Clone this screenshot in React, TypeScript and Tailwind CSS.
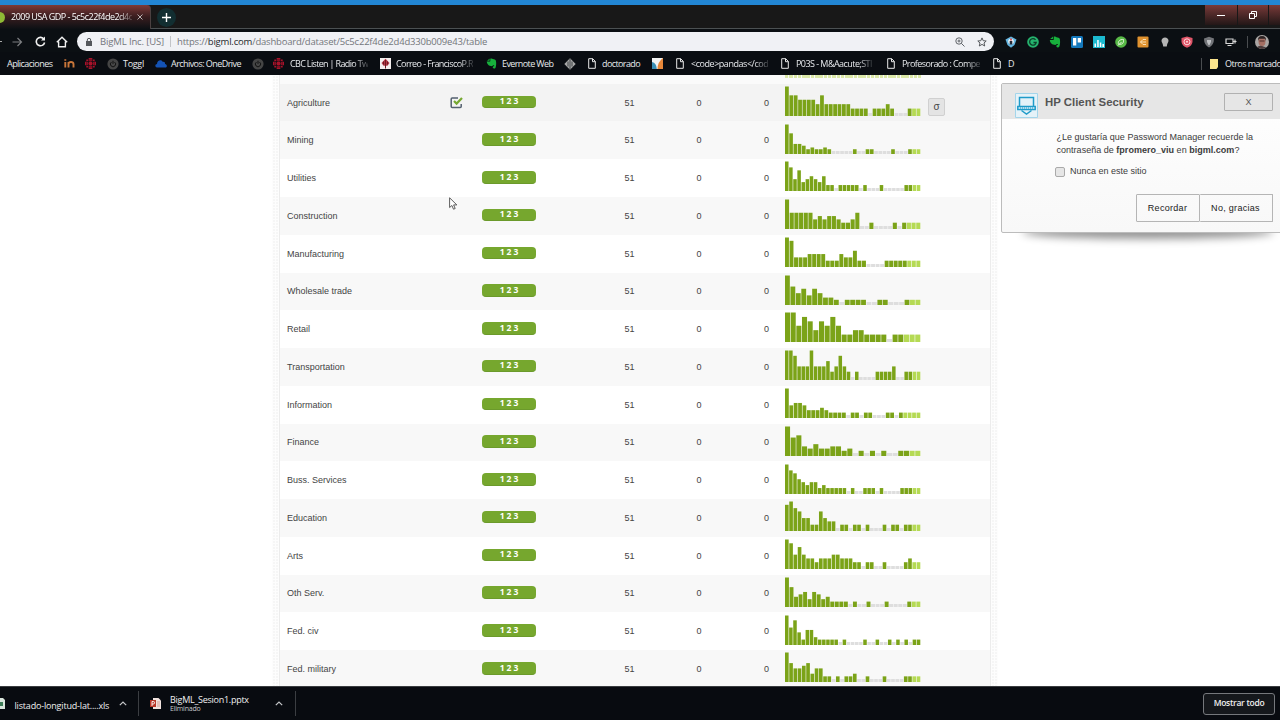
import type { ReactNode } from "react";

type Field = { name: string; bins: number[]; light: number };

// one entry per histogram bin, the last `light` bins are drawn in the pale green
const fields: Field[] = [
  { name: "Agriculture", light: 2, bins: [6, 4, 4, 3, 3, 3, 3, 2, 4, 2, 2, 2, 2, 2, 2, 1, 1, 1, 1, 0, 1, 1, 1, 2, 1, 0, 0, 0, 1, 1, 1] },
  { name: "Mining", light: 2, bins: [15, 10, 4, 4, 3, 1, 2, 1, 1, 2, 1, 0, 0, 0, 0, 0, 1, 0, 0, 1, 1, 0, 0, 0, 0, 1, 0, 0, 0, 1, 1, 1] },
  { name: "Utilities", light: 2, bins: [9, 7, 3, 6, 2, 3, 4, 3, 2, 4, 1, 1, 0, 1, 1, 1, 1, 1, 0, 1, 0, 0, 0, 1, 0, 0, 0, 0, 0, 1, 1, 1, 1] },
  { name: "Construction", light: 3, bins: [8, 4, 4, 4, 4, 4, 2, 3, 2, 3, 3, 2, 1, 1, 2, 4, 0, 0, 1, 0, 0, 0, 0, 1, 0, 1, 1, 1, 1] },
  { name: "Manufacturing", light: 3, bins: [8, 7, 2, 2, 2, 3, 3, 3, 3, 1, 1, 1, 3, 2, 2, 4, 1, 1, 0, 0, 0, 0, 1, 1, 1, 1, 1, 1, 1, 1] },
  { name: "Wholesale trade", light: 2, bins: [12, 7, 4, 6, 3, 6, 4, 2, 2, 1, 0, 1, 1, 1, 1, 0, 0, 1, 1, 0, 0, 0, 1, 1, 1] },
  { name: "Retail", light: 3, bins: [6, 6, 3, 5, 4, 2, 4, 3, 5, 3, 1, 1, 2, 2, 1, 1, 1, 1, 0, 1, 1, 1, 1, 1] },
  { name: "Transportation", light: 2, bins: [5, 5, 4, 2, 2, 2, 5, 2, 2, 2, 3, 1, 2, 4, 2, 1, 0, 1, 0, 0, 0, 0, 1, 1, 1, 1, 2, 0, 0, 1, 1, 1, 1] },
  { name: "Information", light: 4, bins: [11, 4, 5, 5, 4, 2, 2, 2, 3, 2, 1, 1, 1, 1, 0, 1, 1, 0, 1, 1, 0, 0, 0, 1, 1, 0, 1, 1, 1, 1, 1] },
  { name: "Finance", light: 2, bins: [12, 7, 8, 3, 2, 4, 2, 2, 3, 3, 1, 2, 0, 1, 0, 1, 0, 1, 0, 0, 1, 1, 1, 1] },
  { name: "Buss. Services", light: 2, bins: [9, 7, 6, 4, 3, 2, 3, 3, 1, 2, 1, 1, 1, 1, 1, 0, 1, 0, 0, 1, 1, 1, 0, 1, 0, 0, 0, 0, 1, 1, 1, 1, 1] },
  { name: "Education", light: 2, bins: [7, 8, 6, 5, 3, 3, 1, 1, 5, 3, 2, 2, 0, 1, 1, 0, 1, 1, 0, 1, 0, 0, 0, 1, 0, 1, 1, 0, 1, 1, 1, 1] },
  { name: "Arts", light: 2, bins: [7, 6, 3, 5, 3, 2, 2, 1, 2, 2, 2, 3, 3, 2, 2, 2, 1, 1, 0, 1, 1, 0, 0, 1, 0, 0, 0, 0, 1, 2, 1, 1] },
  { name: "Oth Serv.", light: 2, bins: [11, 7, 3, 4, 5, 2, 5, 4, 2, 3, 1, 1, 1, 1, 0, 1, 0, 0, 1, 0, 0, 0, 1, 0, 0, 0, 0, 1, 1, 1] },
  { name: "Fed. civ", light: 0, bins: [11, 6, 9, 4, 1, 5, 5, 2, 1, 1, 1, 1, 1, 0, 1, 0, 0, 0, 0, 1, 0, 0, 1, 0, 0, 1, 0, 1, 0, 1, 0, 1, 1] },
  { name: "Fed. military", light: 2, bins: [10, 6, 4, 4, 5, 6, 2, 4, 4, 1, 1, 0, 1, 0, 1, 1, 2, 0, 0, 1, 0, 0, 0, 1, 0, 0, 0, 0, 1, 1, 1, 1] },
];

function Histogram({ bins, light }: { bins: number[]; light: number }) {
  const max = Math.max(...bins);
  const pitch = 135.9 / bins.length;
  return (
    <svg width="136" height="30" viewBox="0 0 136 30" className="block shrink-0">
      {bins.map((n, i) => {
        const h = 3 + (n / max) * 26.5;
        const fill = n === 0 ? "#dedede" : i >= bins.length - light ? "#b5da54" : "#7ba318";
        return <rect key={i} x={i * pitch} y={30 - h} width={pitch - 0.6} height={h} fill={fill} />;
      })}
    </svg>
  );
}

function Row({ field, index }: { field: Field; index: number }) {
  const bg = index === 0 ? "bg-[#f3f3f3]" : index % 2 ? "bg-[#f8f8f8]" : "bg-white";
  return (
    <div className={`flex h-[37.77px] shrink-0 items-center pl-[7px] text-[9px] text-[#444] ${bg}`}>
      <span className="w-[163px] pt-[1.4px] whitespace-nowrap">{field.name}</span>
      <span className="w-8">
        {index === 0 && (
          <svg width="13" height="13" viewBox="0 0 13 13" fill="none">
            <path d="M8 2H2.2Q1.2 2 1.2 3v7.5q0 1 1 1h8q1 0 1-1V8" stroke="#53606f" strokeWidth="1.5" />
            <path d="M4 5l2.600 2.600 5.400-5.600" stroke="#76a832" strokeWidth="2.200" />
          </svg>
        )}
      </span>
      <span className="mb-[1.6px] flex h-[12.5px] w-[54px] items-center justify-center rounded-[4px] border-b border-[#6b9a2b] bg-[#76a72e] pl-[2px] font-['Open_Sans',sans-serif] text-[8.5px] leading-none font-bold tracking-[2px] text-white">
        123
      </span>
      <span className="w-[98.5px] pt-[1.4px] text-right">51</span>
      <span className="w-[67px] pt-[1.4px] text-right">0</span>
      <span className="mr-4 w-[67.5px] pt-[1.4px] text-right">0</span>
      <div className="mb-[3.4px]">
        <Histogram bins={field.bins} light={field.light} />
      </div>
      {index === 0 && (
        <span className="mt-[8px] ml-[7px] flex h-[18px] w-[17px] items-center justify-center rounded-[2px] border border-[#d0d0d0] bg-[#e4e4e4] text-[10px] leading-none">
          σ
        </span>
      )}
    </div>
  );
}

function Texture() {
  return (
    <div className="w-[7px] shrink-0 bg-[#f6f6f6] bg-[linear-gradient(#fdfdfd_1px,transparent_1px),linear-gradient(90deg,#fdfdfd_1px,transparent_1px)] bg-[size:3px_3px]" />
  );
}

function DatasetTable() {
  return (
    <div className="flex h-[611px] overflow-hidden pl-[272px]">
      <Texture />
      <div className="flex w-[712px] shrink-0 flex-col border-x border-[#ececec]">
        <div className="h-[8.7px] shrink-0 bg-[#fafafa] pl-[505px]">
          <div className="h-[3px] w-[136px] bg-[repeating-linear-gradient(90deg,#dbe8a8_0_3.4px,#fafafa_3.4px_4.3px)]" />
        </div>
        {fields.map((f, i) => (
          <Row key={f.name} field={f} index={i} />
        ))}
      </div>
      <Texture />
    </div>
  );
}

function Doc() {
  return (
    <svg className="shrink-0" width="8" height="11" viewBox="0 0 8 11" fill="none" stroke="#e8e8e8">
      <path d="M.7.7h4L7.3 3.4v6.9H.7z" />
      <path d="M4.5.7v3h2.8" />
    </svg>
  );
}

function Cbc() {
  return (
    <svg className="shrink-0" width="11" height="11" viewBox="0 0 12 12" fill="#a9122a">
      <circle cx="6" cy="6" r="2.2" />
      <path d="M4 0h4v1.8H4zM4 10.2h4V12H4zM0 4h1.8v4H0zM10.2 4H12v4h-1.8zM1.4 1.6h2v2h-2zM8.6 1.6h2v2h-2zM1.4 8.4h2v2h-2zM8.6 8.4h2v2h-2zM4 2.5h4v1H4zM4 8.5h4v1H4zM2.4 4.3h1v3.4h-1zM8.6 4.3h1v3.4h-1z" />
    </svg>
  );
}

function Power() {
  return (
    <svg className="shrink-0" width="12" height="12" viewBox="0 0 12 12" fill="none">
      <circle cx="6" cy="6" r="5.6" fill="#454545" />
      <path d="M6 2.8v3M4.4 4.1a2.6 2.6 0 1 0 3.2 0" stroke="#111" />
    </svg>
  );
}

function Elephant({ size = 12 }: { size?: number }) {
  return (
    <svg className="shrink-0" width={size} height={size} viewBox="0 0 12 12" fill="#17b03c">
      <path d="M4 .6 3.9 3H1.2zM4.7.8c1-.5 2.2-.3 2.8.4 1.500.1 3 .5 3.300 1.800.5 2.200.4 5.500-.4 7.500-.5 1.300-2.600 1.300-3 .1-.3-1 .4-1.700 1.400-1.600.5-.7-.2-1-1.100-1-.5.9-1.500 1.100-2.600.8C2.200 8.300 1 6.200.8 3.900h3.500q.4 0 .4-.5z" />
    </svg>
  );
}

// titles longer than their slot fade out at the right
const FADE = "[mask-image:linear-gradient(90deg,#000_82%,rgba(0,0,0,0.2))]";

function Mark({ slot, icon, text, textClass = "" }: { slot: string; icon?: ReactNode; text?: string; textClass?: string }) {
  return (
    <div className={`flex shrink-0 items-center ${slot}`}>
      {icon}
      {text && <span className={`whitespace-nowrap ${textClass}`}>{text}</span>}
    </div>
  );
}

function Bookmarks() {
  return (
    <div className="flex h-[23px] items-center bg-[#0a0d12] pl-[7px] text-[9px] text-[#e8eaed]">
      <Mark slot="w-[57px]" text="Aplicaciones" textClass="tracking-[-0.54px]" />
      <Mark
        slot="w-[21px]"
        icon={
          <svg width="11" height="9" viewBox="0 0 11 9" fill="none" stroke="#c9763a" strokeWidth="1.9">
            <path d="M1.300 3v5.500M1.300.2v1.500M4.500 8.500V3M4.500 5q.2-2 2.500-2t2.500 2v3.500" />
          </svg>
        }
      />
      <Mark slot="w-[22px]" icon={<Cbc />} />
      <Mark slot="w-12" icon={<Power />} text="Toggl" textClass="ml-[4px] tracking-[-0.3px]" />
      <Mark
        slot="w-[97px]"
        icon={
          <svg width="12" height="8" viewBox="0 0 12 8">
            <path d="M2 7.500C-.5 7.300 0 4 2 4c0-3.500 4-5 5.600-2.200C10 1.500 10.200 3 10 4c2.400.4 2.400 3.300.4 3.500z" fill="#1453b5" />
          </svg>
        }
        text="Archivos: OneDrive"
        textClass="ml-1 tracking-[-0.56px]"
      />
      <Mark slot="w-[21px]" icon={<Power />} />
      <Mark slot="w-[107px]" icon={<Cbc />} text="CBC Listen | Radio Tw" textClass={`ml-[6px] tracking-[-0.66px] ${FADE}`} />
      <Mark
        slot="w-[106px]"
        icon={
          <svg width="11" height="11" viewBox="0 0 11 11">
            <path d="M0 0h11v11H0z" fill="#f4eeee" />
            <path d="M5.500.8 9.500 5 7.500 7.800h-4L1.500 5z" fill="#b23443" />
            <path d="M5.500 2v8.500M3.500 3.500v3M7.500 3.500v3" stroke="#6e1720" />
          </svg>
        }
        text="Correo - FranciscoP.R"
        textClass={`ml-[5px] tracking-[-0.58px] ${FADE}`}
      />
      <Mark slot="w-[78px]" icon={<Elephant size={11} />} text="Evernote Web" textClass="ml-[5px] tracking-[-0.6px]" />
      <Mark
        slot="w-6"
        icon={
          <svg width="12" height="12" viewBox="0 0 12 12">
            <path d="M6 .3 11.700 6 6 11.700.3 6z" fill="#a9a9a9" />
            <path d="M6 1v10M4 3.500v5M8 3.500v5" stroke="#22262a" strokeWidth=".8" />
          </svg>
        }
      />
      <Mark slot="w-16" icon={<Doc />} text="doctorado" textClass="ml-[6px] tracking-[-0.6px]" />
      <Mark
        slot="w-6"
        icon={
          <svg width="11" height="11" viewBox="0 0 11 11">
            <path d="M0 0h11v11H0z" fill="#f3f3f3" />
            <path d="M11 0v11H5.500Q5.500 4 11 0z" fill="#e8883a" />
            <path d="M0 4q4.500 1 4.800 7H0z" fill="#3b8fb5" />
          </svg>
        }
      />
      <Mark slot="w-[105px]" icon={<Doc />} text="<code>pandas</cod" textClass={`ml-[7px] tracking-[-0.46px] ${FADE}`} />
      <Mark slot="w-[106px]" icon={<Doc />} text={"P03S - M&Aacute;STI"} textClass={`ml-[7px] tracking-[-0.55px] ${FADE}`} />
      <Mark slot="w-[106px]" icon={<Doc />} text="Profesorado : Compe" textClass={`ml-[7px] tracking-[-0.57px] ${FADE}`} />
      <Mark slot="w-[208px]" icon={<Doc />} text="D" textClass="ml-[7px]" />
      <span className="mr-2 h-3 w-px shrink-0 bg-[#4a4d50]" />
      <Mark
        slot="w-20"
        icon={
          <svg className="shrink-0" width="8" height="10" viewBox="0 0 8 10">
            <path d="M0 0h8v8L6.500 10H0z" fill="#fbe48d" />
          </svg>
        }
        text="Otros marcado"
        textClass="ml-[7px] tracking-[-0.52px]"
      />
    </div>
  );
}

function TabStrip() {
  return (
    <div className="flex h-[24px] justify-between border-b border-[#4b5052] bg-[#181818]">
      <div className="flex items-center">
        <div className="flex h-[24px] w-[151px] items-center rounded-tr-[4px] border-r border-[#4b4040] bg-linear-to-b from-[#7e3a38] via-[#391d1f] to-[#0c1014] pt-[1px]">
          <span className="-ml-[6px] h-[11px] w-[11px] shrink-0 rounded-full bg-[#8fb935]" />
          <span className="ml-[6px] w-[121px] text-[9px] tracking-[-0.52px] whitespace-nowrap text-white [mask-image:linear-gradient(90deg,#000_88%,rgba(0,0,0,0.2))]">
            2009 USA GDP - 5c5c22f4de2d4c
          </span>
          <svg className="ml-[5px]" width="6" height="6" viewBox="0 0 6 6" stroke="#b9b0b0">
            <path d="M.5.5l5 5M5.500.5l-5 5" />
          </svg>
        </div>
        <span className="mt-[1px] ml-[6px] flex h-[19px] w-[19px] items-center justify-center rounded-full bg-[#122e31]">
          <svg width="9" height="9" viewBox="0 0 9 9" stroke="#fff" strokeWidth="1.400">
            <path d="M4.500 0v9M0 4.500h9" />
          </svg>
        </span>
      </div>
      <div className="flex h-[20px] gap-px text-white *:bg-linear-to-b *:from-[#7a3a39] *:to-[#231717]">
        <span className="flex w-[32px] items-center justify-center">
          <span className="h-px w-2 bg-white" />
        </span>
        <span className="flex w-[30px] items-center justify-center">
          <svg width="8" height="8" viewBox="0 0 8 8" fill="none" stroke="#fff">
            <path d="M.5 2.500h5v5h-5zM2.500 2V.5h5v5H6" />
          </svg>
        </span>
        <span className="w-[11px]" />
      </div>
    </div>
  );
}

function Extensions() {
  return (
    <div className="flex items-center gap-[10px] pl-[11px]">
      <svg width="12" height="12" viewBox="0 0 12 12">
        <path d="M6 .5 11.500 3.500 9.500 9 6 11.700 2.500 9 .5 3.500z" fill="#65b5e0" />
        <circle cx="6" cy="5.500" r="2.800" fill="#e9f3f8" />
        <path d="M4.700 5h2.600v3.500H4.700z" fill="#252b38" />
        <path d="M5.200 2.500h1.600v2H5.200z" fill="#d23a3a" />
      </svg>
      <svg width="12" height="12" viewBox="0 0 12 12" fill="none">
        <circle cx="6" cy="6" r="5.800" fill="#25b36e" />
        <path d="M8.500 3.800A3.300 3.300 0 1 0 9.200 6.500H6.500" stroke="#0d3d28" strokeWidth="1.300" />
      </svg>
      <Elephant />
      <svg width="12" height="12" viewBox="0 0 12 12">
        <rect width="12" height="12" rx="1.500" fill="#1479bd" />
        <path d="M2 2h3.300v7.500H2zM6.700 2H10v4.500H6.700z" fill="#fff" />
      </svg>
      <svg width="12" height="12" viewBox="0 0 12 12">
        <path d="M0 0h12v12H0z" fill="#1bb9cf" />
        <path d="M1.500 7.500H3V11H1.500zM4.200 4h1.500v7H4.200zM6.800 6.500h1.500V11H6.800zM9.400 8H11v3H9.400z" fill="#fff" />
      </svg>
      <svg width="12" height="12" viewBox="0 0 12 12" fill="none">
        <circle cx="6" cy="6" r="5.800" fill="#58b947" />
        <path d="M3.500 8.500c-1-3 1.500-5.500 5-5 .5 3.500-1.500 5.500-4.500 4.500M3 9.500 6.500 6" stroke="#e3f6da" />
      </svg>
      <svg width="12" height="12" viewBox="0 0 12 12">
        <rect x=".5" y=".5" width="11" height="11" rx="1" fill="#e0922f" />
        <path d="M9 3.500H6L3.500 6 6 8.500h3M3.500 6H9" fill="none" stroke="#fff2d6" strokeWidth=".8" />
      </svg>
      <svg width="12" height="12" viewBox="0 0 12 12">
        <path d="M6 1.500c2 0 3.500 1.300 3.500 3.300C9.500 6.500 8 7.500 7.800 10.500H4.200C4 7.500 2.500 6.500 2.500 4.800 2.500 2.800 4 1.500 6 1.500z" fill="#b5b5b5" />
      </svg>
      <svg width="12" height="12" viewBox="0 0 12 12" fill="none">
        <path d="M6 .5 11.500 2v4Q11 10 6 11.800 1 10 .5 6V2z" fill="#df5568" />
        <circle cx="6" cy="5.800" r="3" stroke="#ffd7dc" />
        <circle cx="6" cy="5.800" r="1" fill="#ffd7dc" />
      </svg>
      <svg width="12" height="12" viewBox="0 0 12 12">
        <path d="M6 .8 11 2.500Q11 9 6 11.500 1 9 1 2.500z" fill="#727478" />
        <path d="M4 4h4v2L6.500 9h-1L4 6z" fill="#bfc1c4" />
      </svg>
      <svg width="12" height="12" viewBox="0 0 12 12" fill="none" stroke="#d7d7d7" strokeWidth="1.200">
        <path d="M1 3h7v4.500H1zM8 5.500h3.500M10 3.500v4M2.500 9.500h4" />
      </svg>
    </div>
  );
}

function Toolbar() {
  return (
    <div className="flex h-[23px] items-center bg-[#0b0f13] pt-[2px]">
      <span className="h-px w-[2px] bg-[#aaa]" />
      <svg className="ml-[10px]" width="11" height="10" viewBox="0 0 11 10" fill="none" stroke="#7d7f82" strokeWidth="1.200">
        <path d="M.5 5h9M5.500 1l4 4-4 4" />
      </svg>
      <svg className="ml-3" width="11" height="11" viewBox="0 0 11 11" fill="none" stroke="#f1f1f1" strokeWidth="1.600">
        <path d="M9 3.200A4.200 4.200 0 1 0 9.600 6.500" />
        <path d="M10 .5v4H6z" fill="#f1f1f1" stroke="none" />
      </svg>
      <svg className="ml-[10px]" width="12" height="12" viewBox="0 0 12 12" fill="none" stroke="#f1f1f1" strokeWidth="1.400">
        <path d="M.8 6.300 6 1.200l5.200 5.100M2.600 5.500v5.300h6.800V5.500" />
      </svg>
      <div className="ml-[9px] flex h-[19.500px] w-[917px] shrink-0 items-center rounded-full bg-[#f0f1f5] pl-[9px] text-[9.500px] whitespace-nowrap text-[#73767b]">
        <svg width="6" height="8" viewBox="0 0 6 8">
          <path d="M0 3h6v5H0z" fill="#55585c" />
          <path d="M1.300 3.500V2a1.700 1.700 0 0 1 3.400 0v1.500" fill="none" stroke="#55585c" />
        </svg>
        <span className="ml-2 w-[70px] pt-[1px] tracking-[-0.13px]">BigML Inc. [US]</span>
        <span className="mr-[6px] h-[11px] w-px bg-[#c2c4c8]" />
        <span className="pt-[1px] tracking-[-0.2px]">
          https://<span className="text-[#25282c]">bigml.com</span>/dashboard/dataset/5c5c22f4de2d4d330b009e43/table
        </span>
        <svg className="mr-[12px] ml-auto" width="10" height="10" viewBox="0 0 10 10" fill="none" stroke="#5f6368">
          <circle cx="4" cy="4" r="3.200" />
          <path d="M6.300 6.300 9.500 9.500M2.500 4h3M4 2.500v3" />
        </svg>
        <svg className="mr-[7px]" width="10" height="10" viewBox="0 0 10 10" fill="none" stroke="#55585c">
          <path d="M5 .9 6.200 3.700l3 .3L7 6l.7 3L5 7.400 2.300 9 3 6 .8 4l3-.3z" />
        </svg>
      </div>
      <Extensions />
      <span className="ml-[10px] h-3 w-px bg-[#4a4d50]" />
      <svg className="ml-[7px] shrink-0 rounded-full" width="14" height="14" viewBox="0 0 14 14">
        <path d="M0 0h14v14H0z" fill="#aaa6a4" />
        <ellipse cx="7" cy="6.500" rx="3.500" ry="4.500" fill="#a56f63" />
        <path d="M3 6Q2.500 1 7 1t4 5L10 3.800H4z" fill="#2c2222" />
        <path d="M1 14q2-4 6-3t6 3z" fill="#4c3c3c" />
        <path d="M4.500 6h5" stroke="#4b2c2a" />
      </svg>
    </div>
  );
}

function PasswordPrompt() {
  return (
    <div className="absolute top-[83px] left-[1001px] w-[290px] text-[#3b3b3b]">
      <div className="absolute right-5 bottom-[4px] left-6 h-2 rounded-[50%] shadow-[0_7px_8px_3px_rgba(0,0,0,0.42)]" />
      <div className="relative h-[150px] rounded-[2px] border border-[#bcbcbc] bg-linear-to-b from-white to-[#f8f8f8]">
        <div className="flex h-[35px] items-start bg-[#e6e6e6] pl-[13px]">
          <svg className="mt-[9px]" width="23" height="25" viewBox="0 0 23 25" fill="none">
            <path d="M.5.500h22v24H.500z" fill="#e5f2f8" stroke="#a4d5ea" />
            <path d="M4.500 4.500h14v9h-14zM2.800 13.500h17.400v3H2.800z" stroke="#1f9bc9" strokeWidth="1.500" />
            <path d="M6.500 17.500 11.500 21l5-3.500" stroke="#1f9bc9" strokeWidth="1.500" />
            <path d="M5 15h13" stroke="#1f9bc9" strokeDasharray="1 1" />
          </svg>
          <span className="mt-[11px] ml-[7px] w-[179px] text-[11.400px] leading-[14px] font-bold text-[#555]">HP Client Security</span>
          <span className="mt-[9px] flex h-[18px] w-[49px] items-center justify-center rounded-[1px] border border-[#b1b1b1] pt-[1px] text-[9px] text-[#555]">X</span>
        </div>
        <div className="pt-[12px] pl-[54.500px] text-[9px] leading-[13px]">
          <p className="tracking-[0.02px] whitespace-nowrap">¿Le gustaría que Password Manager recuerde la</p>
          <p className="tracking-[0.02px]">
            contraseña de <b>fpromero_viu</b> en <b>bigml.com</b>?
          </p>
          <div className="mt-[8px] -ml-[2px] flex items-center">
            <span className="mr-[5.500px] h-[10px] w-[10px] rounded-[2px] border border-[#aaa] bg-[#e6e6e6]" />
            Nunca en este sitio
          </div>
        </div>
        <div className="mt-[16px] ml-[133.500px] flex text-[9px] tracking-[0.300px] text-[#222] *:pt-[1px]">
          <span className="flex h-[28px] w-[64px] items-center justify-center rounded-[1px] border border-[#b5b5b5]">Recordar</span>
          <span className="flex h-[28px] w-[73px] items-center justify-center rounded-[1px] border border-l-0 border-[#b5b5b5]">No, gracias</span>
        </div>
      </div>
    </div>
  );
}

function Chevron() {
  return (
    <svg width="8" height="5" viewBox="0 0 8 5" fill="none" stroke="#c5c7c9" strokeWidth="1.200">
      <path d="M.8 4.200 4 1l3.200 3.200" />
    </svg>
  );
}

function DownloadBar() {
  return (
    <div className="flex h-[34px] items-center border-t border-[#3a3d40] bg-[#080b10] text-[9px] leading-none text-[#f0f0f0]">
      <svg width="5" height="11" viewBox="0 0 5 11">
        <path d="M0 0h3l2 2v9H0z" fill="#d9e6dc" />
        <path d="M0 4h3v4H0z" fill="#3d7d57" />
      </svg>
      <span className="ml-[9.500px] w-[104px] pt-[3px] tracking-[-0.18px] whitespace-nowrap">listado-longitud-lat....xls</span>
      <Chevron />
      <span className="ml-[11px] h-[25px] w-px bg-[#3b3e42]" />
      <svg className="ml-[11px]" width="11" height="11" viewBox="0 0 11 11">
        <path d="M3 0h5.500L11 2.500V11H3z" fill="#f1e3df" />
        <path d="M0 2h6v7H0z" fill="#b83527" />
        <path d="M2 8V3.500h1.300a1.200 1.200 0 0 1 0 2.500H2" fill="none" stroke="#fff" strokeWidth=".9" />
        <path d="M7 4h3M7 6h3M7 8h3" stroke="#c98376" strokeWidth=".7" />
      </svg>
      <div className="ml-[9.500px] w-[104.500px]">
        <p className="tracking-[-0.27px]">BigML_Sesion1.pptx</p>
        <p className="mt-[1px] text-[7px] tracking-[-0.2px] text-[#c7c9cc]">Eliminado</p>
      </div>
      <Chevron />
      <span className="ml-3 h-[25px] w-px bg-[#3b3e42]" />
      <span className="mr-[5px] ml-auto flex h-[22px] w-[72px] items-center justify-center rounded-[3px] border border-[#75787c] bg-[#15181c] text-[8.500px] font-semibold tracking-[-0.28px]">
        Mostrar todo
      </span>
    </div>
  );
}

export default function App() {
  return (
    <div className="relative h-[720px] w-[1280px] overflow-hidden bg-white font-['Open_Sans','Noto_Sans',sans-serif]">
      <div className="h-[5px] bg-[#2286d4]" />
      <TabStrip />
      <Toolbar />
      <Bookmarks />
      <main className="font-['Liberation_Sans',Arial,sans-serif]">
        <DatasetTable />
        <PasswordPrompt />
      </main>
      <DownloadBar />
      <svg className="absolute top-[197px] left-[449px]" width="9" height="13" viewBox="0 0 9 13">
        <path d="M.6.8v9.700l2.300-2 1.600 3.700 1.700-.7-1.600-3.600h3.200z" fill="#fff" stroke="#333" strokeWidth=".8" />
      </svg>
    </div>
  );
}
